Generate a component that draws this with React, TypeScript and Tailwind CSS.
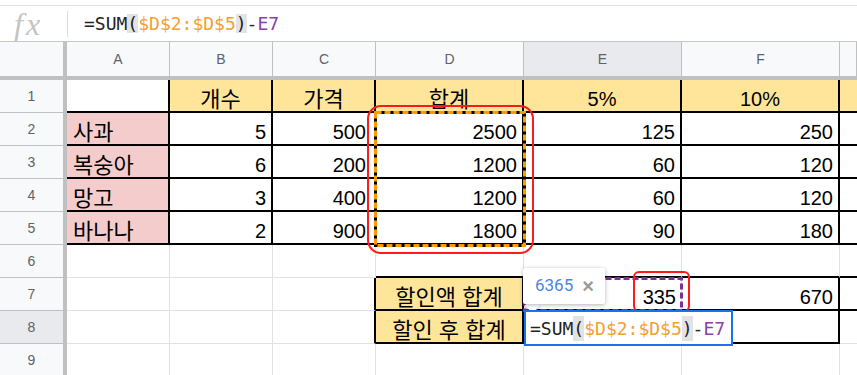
import React from "react";

const R = {
  k: "border-r-2 border-r-black",
  g: "border-r border-r-[#e2e2e2]",
  n: "",
} as const;
const B = {
  k: "border-b-2 border-b-black",
  g: "border-b border-b-[#e2e2e2]",
} as const;
const BG = { w: "bg-white", y: "bg-[#ffe599]", p: "bg-[#f4cccc]" } as const;
const AL = {
  l: "justify-start pl-[6px]",
  r: "justify-end pr-[5px]",
  rc: "justify-end pr-[8px]",
  c: "justify-center",
} as const;

type Spec = [string, keyof typeof BG, keyof typeof R, keyof typeof B, keyof typeof AL];

const fruit = (name: string, n: string, price: string, sum: string, p5: string, p10: string): Spec[] => [
  [name, "p", "k", "k", "l"],
  [n, "w", "k", "k", "r"],
  [price, "w", "k", "k", "rc"],
  [sum, "w", "k", "k", "r"],
  [p5, "w", "k", "k", "r"],
  [p10, "w", "k", "k", "r"],
  ["", "w", "n", "k", "r"],
];

const ROWS: Spec[][] = [
  [
    ["", "w", "k", "k", "l"],
    ["개수", "y", "k", "k", "c"],
    ["가격", "y", "k", "k", "c"],
    ["합계", "y", "k", "k", "c"],
    ["5%", "y", "k", "k", "c"],
    ["10%", "y", "k", "k", "c"],
    ["", "y", "n", "k", "c"],
  ],
  fruit("사과", "5", "500", "2500", "125", "250"),
  fruit("복숭아", "6", "200", "1200", "60", "120"),
  fruit("망고", "3", "400", "1200", "60", "120"),
  fruit("바나나", "2", "900", "1800", "90", "180"),
  [
    ["", "w", "g", "g", "l"],
    ["", "w", "g", "g", "l"],
    ["", "w", "g", "g", "l"],
    ["", "w", "g", "k", "l"],
    ["", "w", "g", "k", "l"],
    ["", "w", "g", "k", "l"],
    ["", "w", "n", "k", "l"],
  ],
  [
    ["", "w", "g", "g", "l"],
    ["", "w", "g", "g", "l"],
    ["", "w", "k", "g", "l"],
    ["할인액 합계", "y", "k", "k", "c"],
    ["335", "w", "g", "k", "r"],
    ["670", "w", "k", "k", "r"],
    ["", "w", "n", "k", "l"],
  ],
  [
    ["", "w", "g", "g", "l"],
    ["", "w", "g", "g", "l"],
    ["", "w", "k", "g", "l"],
    ["할인 후 합계", "y", "k", "k", "c"],
    ["", "w", "g", "k", "l"],
    ["", "w", "k", "k", "l"],
    ["", "w", "n", "g", "l"],
  ],
  [
    ["", "w", "g", "g", "l"],
    ["", "w", "g", "g", "l"],
    ["", "w", "g", "g", "l"],
    ["", "w", "g", "g", "l"],
    ["", "w", "g", "g", "l"],
    ["", "w", "g", "g", "l"],
    ["", "w", "n", "g", "l"],
  ],
];

const COLS = ["A", "B", "C", "D", "E", "F", ""];

const hangul = /[가-힣]/;

function Formula({ tall }: { tall?: boolean }) {
  const paren = tall
    ? "bg-[#e3e3e3] inline-block leading-[25px]"
    : "bg-[#e3e3e3] inline-block leading-[19px]";
  return (
    <span className="whitespace-pre font-['DejaVu_Sans_Mono',monospace] text-[18px] text-[#222]">
      =SUM<span className={paren}>(</span>
      <span className="text-[#f4a030]">$D$2:$D$5</span>
      <span className={paren}>)</span>-<span className="text-[#8a3ea8]">E7</span>
    </span>
  );
}

// dashed range outline, like sheets draws round a referenced range
function RangeMark({ w, h, color, under }: { w: number; h: number; color: string; under?: string }) {
  return (
    <svg width={w} height={h} className="block">
      {under && <rect x={1.5} y={1.5} width={w - 3} height={h - 3} fill="none" stroke={under} strokeWidth={3} />}
      <rect x={1.5} y={1.5} width={w - 3} height={h - 3} fill="none" stroke={color} strokeWidth={3} strokeDasharray="6 3" />
    </svg>
  );
}

export default function App() {
  return (
    <div className="h-[375px] w-[857px] overflow-hidden bg-white font-['Liberation_Sans','Noto_Sans_CJK_KR',sans-serif]">
      <div className="pt-[5px]">
        <div className="flex h-[37px] items-center border-y border-t-[#e3e3e3] border-b-[#c7c7c7]">
          <div className="flex h-[26px] w-[68px] items-center border-r border-r-[#dadce0] pl-[14px]">
            <span className="font-['Liberation_Serif',serif] text-[32px] italic leading-none tracking-[3px] text-[#c4c4c4]">
              fx
            </span>
          </div>
          <div className="pl-[16px]">
            <Formula />
          </div>
        </div>
      </div>

      <div className="relative">
        <div className="grid grid-cols-[67px_103px_103px_103px_148px_158px_158px_1fr] grid-rows-[38px_repeat(9,33px)]">
          <div className="box-border border-r-4 border-b-4 border-r-[#c0c0c0] border-b-[#c0c0c0] bg-[#f8f9fa]" />
          {COLS.map((c) => (
            <div
              key={c || "g"}
              className={`box-border flex items-center justify-center border-b-4 border-r border-b-[#c0c0c0] border-r-[#c0c0c0] pt-[1px] text-[14px] text-[#5f6368] ${
                c === "E" ? "bg-[#e8eaed]" : "bg-[#f8f9fa]"
              }`}
            >
              {c}
            </div>
          ))}
          {ROWS.map((row, i) => (
            <React.Fragment key={i}>
              <div
                className={`box-border flex items-center justify-center border-r-4 border-b border-r-[#c0c0c0] border-b-[#c0c0c0] text-[14px] text-[#5f6368] ${
                  i === 7 ? "bg-[#e8eaed]" : "bg-[#f8f9fa]"
                }`}
              >
                {i + 1}
              </div>
              {row.map(([t, bg, r, b, al], j) => (
                <div
                  key={j}
                  className={`box-border flex items-end overflow-hidden whitespace-nowrap leading-[23px] text-black ${
                    hangul.test(t) ? "text-[22px]" : "text-[20px]"
                  } ${BG[bg]} ${R[r]} ${B[b]} ${AL[al]}`}
                >
                  {t}
                </div>
              ))}
            </React.Fragment>
          ))}
        </div>

        {/* D2:D5 reference range */}
        <div className="absolute left-[374px] top-[69px]">
          <RangeMark w={152} h={136} color="#ff9900" under="#000" />
        </div>
        <div className="absolute left-[367px] top-[63px] h-[149px] w-[167px] rounded-[14px] border-2 border-[#ff1a1a]" />

        {/* E7 reference */}
        <div className="absolute left-[523px] top-[235px]">
          <RangeMark w={160} h={35} color="#7b3294" />
        </div>
        <div className="absolute left-[633px] top-[229px] h-[41px] w-[57px] rounded-[6px] border-2 border-[#ff1a1a]" />

        {/* value preview tooltip */}
        <div className="absolute left-[527px] top-[258px] h-[11px] w-[11px] rotate-45 bg-white shadow-[0_1px_3px_rgba(0,0,0,0.3)]" />
        <div className="absolute left-[523px] top-[226px] flex h-[36px] w-[82px] items-center gap-[9px] rounded-[2px] bg-white pl-[12px] shadow-[0_1px_4px_rgba(0,0,0,0.3)]">
          <span className="font-['Roboto',sans-serif] text-[17px] text-[#4c84e0]">6365</span>
          <span className="text-[20px] font-bold leading-none text-[#9a9a9a]">×</span>
        </div>

        {/* active cell editor */}
        <div className="absolute left-[524px] top-[268px] flex h-[36px] w-[209px] items-center border-2 border-[#1a73e8] bg-white pl-[4px]">
          <Formula tall />
        </div>
      </div>
    </div>
  );
}
